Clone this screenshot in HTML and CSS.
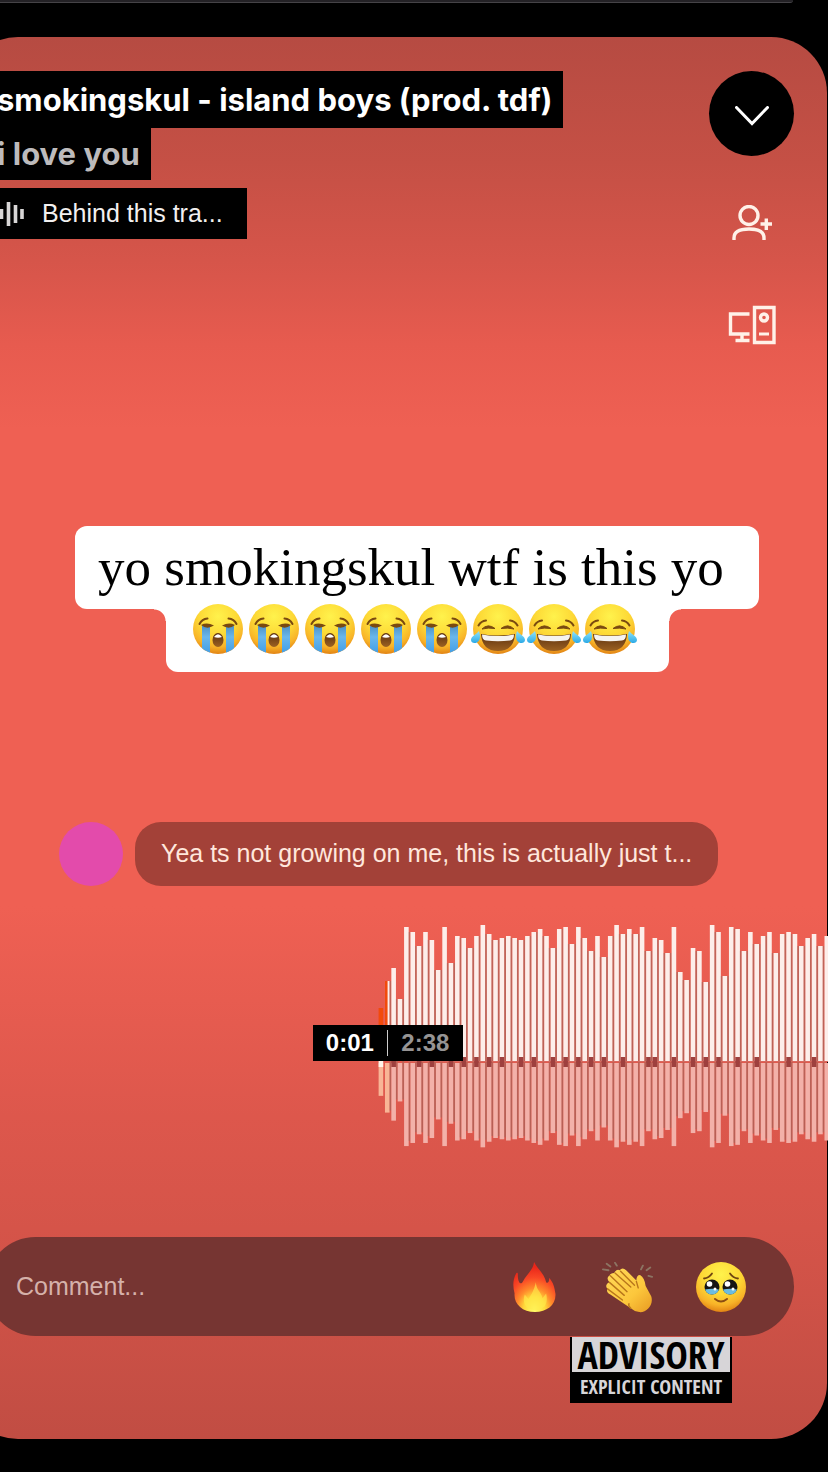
FILE: index.html
```html
<!DOCTYPE html>
<html lang="en">
<head>
    <meta charset="UTF-8">
    <meta name="viewport" content="width=device-width, initial-scale=1.0">
    <title>smokingskul - island boys (prod. tdf)</title>
    <link rel="stylesheet" href="styles.css">
</head>
<body>
    <svg class="defs" aria-hidden="true">
        <defs>
            <radialGradient id="face" cx="0.5" cy="0.25" r="0.78">
                <stop offset="0" stop-color="#fff24c"/>
                <stop offset="0.5" stop-color="#fdd835"/>
                <stop offset="0.78" stop-color="#f8b328"/>
                <stop offset="1" stop-color="#dd7a10"/>
            </radialGradient>
            <linearGradient id="tear" x1="0" y1="0" x2="0" y2="1">
                <stop offset="0" stop-color="#4b8fc4"/>
                <stop offset="0.4" stop-color="#69b7ec"/>
                <stop offset="1" stop-color="#3d9ce6"/>
            </linearGradient>
            <linearGradient id="drop" x1="0" y1="0" x2="0" y2="1">
                <stop offset="0" stop-color="#8fe4fb"/>
                <stop offset="1" stop-color="#2ba9e6"/>
            </linearGradient>
            <linearGradient id="mouth" x1="0" y1="0" x2="0" y2="1">
                <stop offset="0" stop-color="#5b300f"/>
                <stop offset="1" stop-color="#9c6122"/>
            </linearGradient>
            <radialGradient id="flame" cx="0.5" cy="0.95" r="0.85">
                <stop offset="0" stop-color="#ffff6e"/>
                <stop offset="0.3" stop-color="#ffd83a"/>
                <stop offset="0.5" stop-color="#ff8a2b"/>
                <stop offset="0.75" stop-color="#f94725"/>
                <stop offset="1" stop-color="#e9261a"/>
            </radialGradient>
            <linearGradient id="skin" x1="0" y1="0" x2="1" y2="1">
                <stop offset="0" stop-color="#ffd95a"/>
                <stop offset="0.6" stop-color="#fcc73c"/>
                <stop offset="1" stop-color="#e89a22"/>
            </linearGradient>
            <clipPath id="round"><circle cx="28" cy="26" r="25"/></clipPath>
        </defs>
        <symbol id="sob" viewBox="0 0 56 52">
            <circle cx="28" cy="26" r="25" fill="url(#face)"/>
            <g clip-path="url(#round)">
                <path d="M12 22h8v30h-8zM36 22h8v30h-8z" fill="url(#tear)"/>
            </g>
            <path d="M9.500 21Q12 16 17.500 15.500M46.500 21Q44 16 38.500 15.500" fill="none" stroke="#7a4a10" stroke-width="2" stroke-linecap="round"/>
            <path d="M11 22Q17 19 24 22.500Q17 27 11 22zM45 22Q39 19 32 22.500Q39 27 45 22z" fill="#7a4a10"/>
            <ellipse cx="28" cy="37" rx="5.500" ry="7" fill="url(#mouth)"/>
            <path d="M24 34Q28 28.500 32 34Q28 35.500 24 34z" fill="#fff"/>
        </symbol>
        <symbol id="joy" viewBox="0 0 56 52">
            <circle cx="28" cy="26" r="25" fill="url(#face)"/>
            <path d="M8.500 22.500Q11 18 16 17.500M47.500 22.500Q45 18 40 17.500" fill="none" stroke="#7a4a10" stroke-width="2" stroke-linecap="round"/>
            <path d="M12 26Q18 20 25 25.500Q18 24.500 12 26zM44 26Q38 20 31 25.500Q38 24.500 44 26z" fill="#7a4a10" stroke="#7a4a10" stroke-width="1" stroke-linejoin="round"/>
            <path d="M11 31Q28 34 45 31Q44 48 28 48Q12 48 11 31z" fill="url(#mouth)"/>
            <path d="M12 31.500Q28 34.500 44 31.500Q44 37 40 37.500Q28 39 16 37.500Q12 37 12 31.500z" fill="#f5f3f0"/>
            <path d="M9 28Q11 34 9 37.500C7 41 1 41 1 37C1 33 6 32 9 28zM47 28Q45 34 47 37.500C49 41 55 41 55 37C55 33 50 32 47 28z" fill="url(#drop)"/>
        </symbol>
        <symbol id="fire" viewBox="0 0 56 56">
            <path d="M27 1C30 8 38 13 40 23C42 25 44 21 43 18C48 23 49 29 50 35C51 47 41 55 28 55C14 55 5 46 6 35C4 27 4 20 8 13C11 11 8 17 11 23C12 25 14 24 15 22C19 14 26 10 27 1z" fill="url(#flame)"/>
            <path d="M29 23C29 31 35 34 36 40L40 35C43 48 36 53 28 53C17 53 14 43 17 36L21 41C25 35 27 31 29 23z" fill="#ffe94a" opacity="0.65"/>
        </symbol>
        <symbol id="clap" viewBox="0 0 56 56">
            <path d="M6 30Q3 27 6 24L8 23Q4 18 8 16Q9 13 13 13Q16 8 19 10Q22 6 26 10L37 21Q37 15 41 15Q46 18 47 27L53 38C56 47 48 56 40 55Q34 54 31 51L9 36Q4 34 6 30z" fill="url(#skin)"/>
            <path d="M8 23L24 37M9 16L27 33M14 13L31 28M20 11L35 26M6 30L22 42M37 22L39 29M31 51Q28 48 29 46" fill="none" stroke="#b9761b" stroke-width="1.500" stroke-linecap="round"/>
            <path d="M5 3l4 3M1 9l6 1M14 2l2 3M42 9l2-4M48 10l4-3M50 16l4 1" fill="none" stroke="#8c7463" stroke-width="2" stroke-linecap="round"/>
        </symbol>
        <symbol id="plead" viewBox="0 0 56 52">
            <circle cx="28" cy="26" r="25" fill="url(#face)"/>
            <path d="M11 17.500Q16 17 19 12.500M45 17.500Q40 17 37 12.500" fill="none" stroke="#6f4510" stroke-width="1.800" stroke-linecap="round"/>
            <circle cx="19" cy="26" r="7.500" fill="#171513"/>
            <circle cx="37" cy="26" r="7.500" fill="#171513"/>
            <path d="M12 28.500Q19 27 26 28.500Q24 33.500 19 33.500Q14 33.500 12 28.500zM30 28.500Q37 27 44 28.500Q42 33.500 37 33.500Q32 33.500 30 28.500z" fill="#6bbce0"/>
            <circle cx="16.500" cy="23" r="2.800" fill="#fff"/>
            <circle cx="34.500" cy="23" r="2.800" fill="#fff"/>
            <circle cx="22" cy="28" r="1.500" fill="#fff"/>
            <circle cx="40" cy="28" r="1.500" fill="#fff"/>
            <path d="M22 38Q28 43 34 38" fill="none" stroke="#8a4c12" stroke-width="2" stroke-linecap="round"/>
        </symbol>
    </svg>

    <div class="previous-card"></div>

    <main class="player">
        <header class="header">
            <div class="track">
                <h1 class="track-title">smokingskul - island boys (prod. tdf)</h1>
                <h2 class="track-artist">i love you</h2>
                <button class="behind-btn">
                    <svg class="bars-icon" width="38" height="26" viewBox="0 0 38 26" aria-hidden="true">
                        <path d="M2 9v8M9 5v16M15.500 8v10M22.500 1v24M29.500 4v18M36 8v10" stroke="#d8d6d6" stroke-width="3.600"/>
                    </svg>
                    Behind this tra...
                </button>
            </div>
            <div class="actions">
                <button class="close-btn" aria-label="Close player">
                    <svg width="34" height="20" viewBox="0 0 34 20">
                        <path d="M1.500 1.500L17 17.500L32.500 1.500" fill="none" stroke="#fff" stroke-width="3" stroke-linecap="round"/>
                    </svg>
                </button>
                <button class="action-btn" aria-label="Follow">
                    <svg width="40" height="36" viewBox="0 0 40 36">
                        <g fill="none" stroke="#fff1e8" stroke-width="3.400">
                            <circle cx="17" cy="10.500" r="9"/>
                            <path d="M2 35V33C2 27 7 24 17 24S32 27 32 33V35M28.500 19H40M34.300 13.500V25"/>
                        </g>
                    </svg>
                </button>
                <button class="action-btn" aria-label="Devices">
                    <svg width="48" height="40" viewBox="0 0 48 40">
                        <g fill="none" stroke="#fff1e8" stroke-width="3.400">
                            <path d="M21.500 9H2.500V29H21.500M14 29V35M7.500 35.500H21.500"/>
                            <path d="M26.500 2.500H46V37.500H26.500z"/>
                            <circle cx="36" cy="12.500" r="3.500"/>
                            <path d="M31 29H41" stroke-width="3"/>
                        </g>
                    </svg>
                </button>
            </div>
        </header>

        <section class="caption">
            <p class="caption-text">yo smokingskul wtf is this yo</p>
            <div class="caption-emoji">
                <svg><use href="#sob"/></svg>
                <svg><use href="#sob"/></svg>
                <svg><use href="#sob"/></svg>
                <svg><use href="#sob"/></svg>
                <svg><use href="#sob"/></svg>
                <svg><use href="#joy"/></svg>
                <svg><use href="#joy"/></svg>
                <svg><use href="#joy"/></svg>
            </div>
        </section>

        <div class="comment">
            <div class="avatar"></div>
            <p class="bubble">Yea ts not growing on me, this is actually just t...</p>
        </div>

        <div class="waveform">
            <svg id="waveform" class="wave" aria-hidden="true"></svg>
            <div class="time">
                <span class="time-now">0:01</span>
                <span class="time-total">2:38</span>
            </div>
        </div>

        <form class="comment-bar">
            <input type="text" placeholder="Comment..." aria-label="Comment">
            <div class="reactions">
                <button type="button" aria-label="Fire"><svg><use href="#fire"/></svg></button>
                <button type="button" aria-label="Clap"><svg><use href="#clap"/></svg></button>
                <button type="button" aria-label="Touched"><svg><use href="#plead"/></svg></button>
            </div>
        </form>

        <div class="advisory">
            <div class="advisory-top">ADVISORY</div>
            <div class="advisory-bottom">EXPLICIT CONTENT</div>
        </div>
    </main>

    <script src="waveform.js"></script>
</body>
</html>
```
FILE: styles.css
```css
* {
    box-sizing: border-box;
}
body {
    font-family: "Liberation Sans", Arial, sans-serif;
    background-color: #000;
    margin: 0;
    overflow: hidden;
}
h1, h2, p {
    margin: 0;
}
button {
    background: none;
    border: none;
    padding: 0;
    font-family: inherit;
    cursor: pointer;
}
.defs {
    position: absolute;
    width: 0;
    height: 0;
}
.previous-card {
    height: 3px;
    margin-right: 35px;
    background-color: #232125;
    border-bottom: 1px solid #454347;
    border-bottom-right-radius: 4px;
}
.player {
    margin: 34px 1px 32px -38px;
    padding: 34px 33px 36px 24px;
    border-radius: 56px;
    background: linear-gradient(#b64b42 0, #c55045 9%, #d6554a 16%, #e75b4f 22%, #ef6053 28%, #ef6053 62%, #dd574c 77%, #d55449 85%, #c14d43 100%);
}
.header {
    display: flex;
    justify-content: space-between;
}
.track {
    display: flex;
    flex-direction: column;
    align-items: flex-start;
}
.track-title, .track-artist {
    background-color: #000;
    font-family: Inter, "Liberation Sans", sans-serif;
    font-size: 31px;
    font-weight: 700;
    line-height: 57px;
    padding: 0 11px;
    color: #fff;
    white-space: nowrap;
}
.track-artist {
    line-height: 52px;
    color: #bdbbbc;
}
.behind-btn {
    display: flex;
    align-items: center;
    gap: 18px;
    height: 51px;
    margin-top: 8px;
    padding-right: 24px;
    background-color: #000;
    color: #f2f0f0;
    font-size: 25px;
    white-space: nowrap;
}
.actions {
    display: flex;
    flex-direction: column;
    width: 85px;
}
.close-btn {
    display: flex;
    align-items: center;
    justify-content: center;
    height: 85px;
    padding-top: 4px;
    margin-bottom: 16px;
    border-radius: 50%;
    background-color: #000;
}
.action-btn {
    display: flex;
    align-items: center;
    justify-content: center;
    height: 102px;
}
.caption {
    display: flex;
    flex-direction: column;
    align-items: center;
    margin: 150px -34px 0 20px;
}
.caption-text, .caption-emoji {
    background-color: #fff;
    border-radius: 12px;
}
.caption-text {
    font-family: "Liberation Serif", serif;
    font-size: 53px;
    line-height: 83px;
    padding: 0 35px 0 23px;
    color: #000;
    white-space: nowrap;
}
.caption-emoji {
    display: flex;
    position: relative;
    height: 63px;
    padding: 0 31px 0 24px;
    border-radius: 0 0 12px 12px;
}
.caption-emoji::before, .caption-emoji::after {
    content: "";
    position: absolute;
    top: 0;
    width: 12px;
    height: 12px;
}
.caption-emoji::before {
    right: 100%;
    background: radial-gradient(circle at 0 100%, transparent 11px, #fff 12px);
}
.caption-emoji::after {
    left: 100%;
    background: radial-gradient(circle at 100% 100%, transparent 11px, #fff 12px);
}
.caption-emoji svg {
    width: 56px;
    height: 52px;
    margin-top: -6px;
}
.comment {
    display: flex;
    gap: 12px;
    margin: 150px 76px 0 73px;
}
.avatar {
    flex: none;
    width: 64px;
    height: 64px;
    border-radius: 50%;
    background-color: #e34bab;
}
.bubble {
    flex: 1;
    min-width: 0;
    padding: 0 26px;
    border-radius: 26px;
    background-color: #a34138;
    color: #ffe7dc;
    font-size: 25px;
    line-height: 63px;
    white-space: nowrap;
}
.waveform {
    position: relative;
    height: 225px;
    margin: 38px -34px 0 48.5%;
}
.wave {
    display: block;
    width: 100%;
    height: 100%;
}
.time {
    position: absolute;
    top: 101px;
    left: -65px;
    display: flex;
    align-items: center;
    height: 36px;
    background-color: #000;
    font-size: 24px;
    font-weight: bold;
    line-height: 26px;
}
.time span {
    width: 75px;
    text-align: center;
}
.time-now {
    border-right: 1px solid #ccc;
    color: #fff;
}
.time-total {
    color: #969494;
}
.comment-bar {
    position: relative;
    display: flex;
    align-items: center;
    height: 99px;
    margin-top: 88px;
    padding: 0 45px 0 30px;
    border-radius: 50px;
    background-color: #763532;
}
.comment-bar input {
    flex: 1;
    min-width: 0;
    padding: 0;
    border: none;
    outline: none;
    background: none;
    color: #fff;
    font-family: inherit;
    font-size: 25px;
}
.comment-bar input::placeholder {
    color: #d5b1aa;
    opacity: 1;
}
.reactions {
    display: flex;
    gap: 37px;
}
.reactions button {
    display: flex;
    align-items: center;
}
.reactions svg {
    width: 56px;
    height: 52px;
}
.advisory {
    width: 162px;
    margin: 1px 62px 0 auto;
    border: 2px solid #000;
    border-top: none;
    background-color: #000;
    font-family: "Liberation Sans Narrow", "Open Sans Condensed", "Liberation Sans", sans-serif;
    font-weight: bold;
    text-align: center;
    white-space: nowrap;
}
.advisory-top {
    height: 35px;
    background-color: #d7d5d8;
    color: #000;
    font-size: 38px;
    line-height: 34px;
}
.advisory-bottom {
    color: #d7d5d8;
    font-size: 20px;
    line-height: 29px;
}
```
FILE: waveform.js
```js
// peak heights of the track, in pixels above the centre line
const peaks = [
    53, 80, 93, 62, 134, 129, 115, 129, 121, 91, 134, 98, 125, 123, 113, 125, 136, 127,
    121, 123, 125, 123, 121, 125, 129, 132, 125, 113, 132, 134, 117, 134, 123, 110, 125,
    104, 125, 136, 127, 132, 127, 134, 110, 123, 121, 108, 134, 89, 81, 113, 110, 79, 136,
    129, 85, 134, 132, 110, 129, 117, 125, 129, 108, 127, 129, 127, 115, 123, 127, 115, 125
];
// bars that carry a comment marker
const markers = [2, 6, 8, 11, 13, 15, 17, 19, 22, 24, 27, 29, 31, 33, 35, 38, 42, 43,
    46, 49, 51, 53, 56, 59, 64, 68];

const wave = document.getElementById('waveform');
const base = 137;
const step = 6.37;

function addRect(x, y, width, height, fill) {
    const rect = document.createElementNS('http://www.w3.org/2000/svg', 'rect');
    rect.setAttribute('x', x);
    rect.setAttribute('y', y);
    rect.setAttribute('width', width);
    rect.setAttribute('height', height);
    rect.setAttribute('fill', fill);
    wave.appendChild(rect);
}

peaks.forEach((peak, i) => {
    const x = 0.6 + i * step;
    const low = peak * 0.62;
    // gap between two bars
    if (i > 1) {
        const gap = Math.min(peak, peaks[i - 1]);
        addRect(x - 1.8, base - gap, 1.8, gap * 1.62, 'rgba(130, 110, 100, 0.4)');
    }
    addRect(x, base - peak, 4.6, peak, i === 0 ? '#f24a0c' : '#fdeeea');
    addRect(x, base + 2, 4.6, low, i < 2 ? '#f8b596' : '#f3b1a9');
});
// played part of the second bar
addRect(0.6 + step, base - 80, 2.6, 80, '#f24a0c');
addRect(0.6, base, 4.6, 6, '#fff3e8');
addRect(30, base, 430, 1, '#d8685e');

markers.forEach(i => {
    addRect(0.6 + i * step, base - 4, 4.6, 10, '#9e403e');
});
```
